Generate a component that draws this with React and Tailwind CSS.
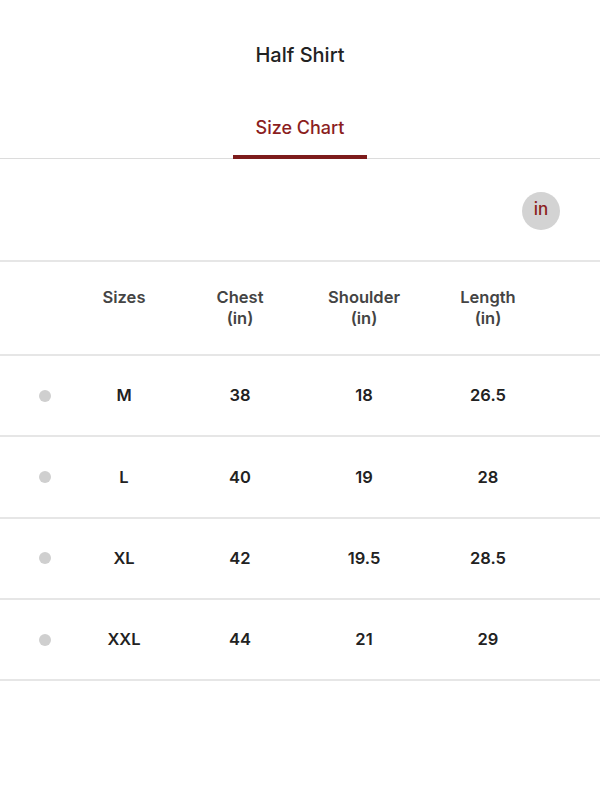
import React from "react";

const rows = [
  ["M", "38", "18", "26.5"],
  ["L", "40", "19", "28"],
  ["XL", "42", "19.5", "28.5"],
  ["XXL", "44", "21", "29"],
];

export default function App() {
  return (
    <div
      className="w-[600px] h-[800px] bg-white text-[#222]"
      style={{ fontFamily: "Inter, 'Open Sans', sans-serif" }}
    >
      <div className="pt-[42px] text-center text-[20px] leading-[26px] font-medium text-[#222]">
        Half Shirt
      </div>
      <div className="mt-[48px] flex justify-center border-b border-[#dcdcdc]">
        <div className="w-[134px] border-b-[4px] border-[#7d1c1c] pb-[15px] text-center text-[18px] leading-[24px] font-medium text-[#8b1e1e] -mb-px">
          Size Chart
        </div>
      </div>
      <div className="h-[103px] flex items-center justify-end pr-[40px] pt-[2px] border-b-2 border-[#e6e6e6]">
        <div className="w-[38px] h-[38px] rounded-full bg-[#d3d3d3] flex items-center justify-center text-[17px] font-medium text-[#8b1e1e] pb-[2px]">
          in
        </div>
      </div>
      <div className="grid grid-cols-[70px_108px_124px_124px_124px] h-[94px] items-center border-b-2 border-[#e6e6e6] text-[16.5px] leading-[21px] font-semibold text-[#444] text-center">
        <div />
        <div className="-mt-[21px]">Sizes</div>
        <div>Chest<br />(in)</div>
        <div>Shoulder<br />(in)</div>
        <div>Length<br />(in)</div>
      </div>
      {rows.map((r) => (
        <div
          key={r[0]}
          className="grid grid-cols-[70px_108px_124px_124px_124px] h-[81.3px] items-center border-b-2 border-[#e6e6e6] text-[16.5px] font-semibold text-[#222] text-center"
        >
          <div className="flex">
            <div className="ml-[39px] w-[12px] h-[12px] rounded-full bg-[#cfcfcf]" />
          </div>
          <div>{r[0]}</div>
          <div>{r[1]}</div>
          <div>{r[2]}</div>
          <div>{r[3]}</div>
        </div>
      ))}
    </div>
  );
}
